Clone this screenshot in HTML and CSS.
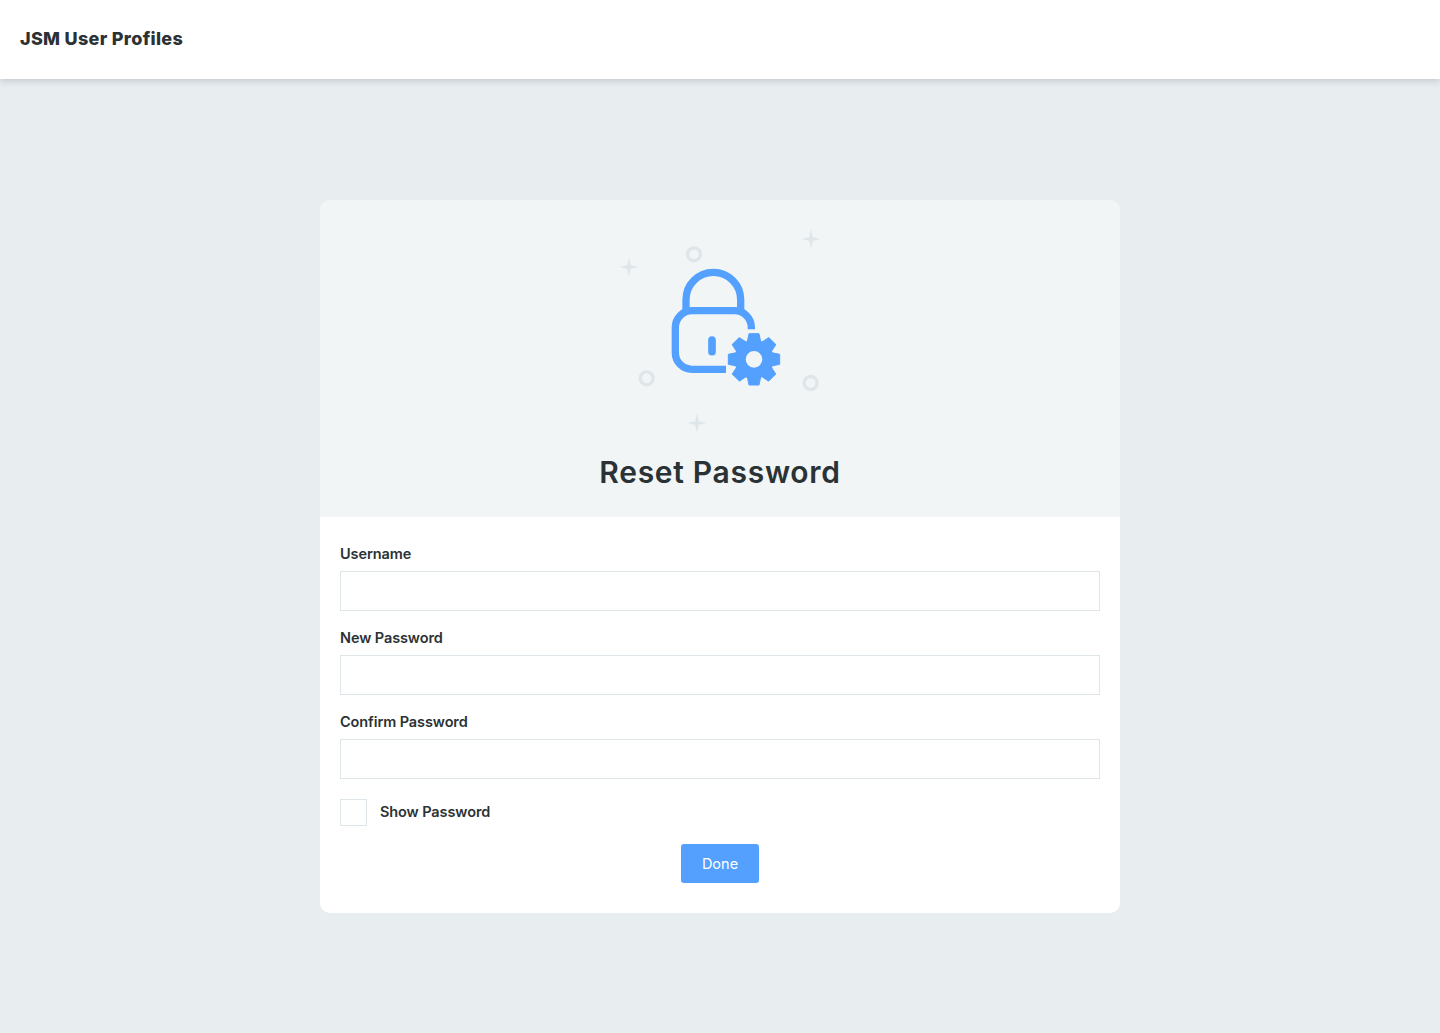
FILE: index.html
```html
<!DOCTYPE html>
<html lang="en">
<head>
<meta charset="utf-8">
<title>Reset Password</title>
<link rel="stylesheet" href="styles.css">
</head>
<body>
<header class="topbar"><span class="brand">JSM User Profiles</span></header>
<main class="page">
  <section class="card">
    <div class="card-head">
      <svg class="art" viewBox="0 0 660 660" aria-hidden="true">
        <g class="deco-ring">
          <circle cx="252" cy="103" r="19.5"/>
          <circle cx="110" cy="475" r="19.5"/>
          <circle cx="602" cy="489" r="19.5"/>
        </g>
        <g class="deco-star">
          <path transform="translate(57 141)" d="M0-26L5-5 26 0 5 5 0 26-5 5-26 0-5-5Z"/>
          <path transform="translate(603 57)" d="M0-26L5-5 26 0 5 5 0 26-5 5-26 0-5-5Z"/>
          <path transform="translate(261 609)" d="M0-26L5-5 26 0 5 5 0 26-5 5-26 0-5-5Z"/>
        </g>
        <g class="lock">
          <path d="M228 272V239a82 82 0 0 1 164 0V272"/>
          <path d="M424 328V322a50 50 0 0 0-50-50H246a50 50 0 0 0-50 50V398a50 50 0 0 0 50 50H348"/>
          <path d="M306 360V395"/>
        </g>
        <g class="gear" transform="translate(432 418)">
          <circle class="gear-ring" r="42"/>
          <path d="M-15-77H15L21-48H-21Z"/>
          <path d="M-15-77H15L21-48H-21Z" transform="rotate(45)"/>
          <path d="M-15-77H15L21-48H-21Z" transform="rotate(90)"/>
          <path d="M-15-77H15L21-48H-21Z" transform="rotate(135)"/>
          <path d="M-15-77H15L21-48H-21Z" transform="rotate(180)"/>
          <path d="M-15-77H15L21-48H-21Z" transform="rotate(225)"/>
          <path d="M-15-77H15L21-48H-21Z" transform="rotate(270)"/>
          <path d="M-15-77H15L21-48H-21Z" transform="rotate(315)"/>
        </g>
      </svg>
      <h1 class="title">Reset Password</h1>
    </div>
    <form class="form">
      <div class="field">
        <label class="label" for="u">Username</label>
        <input class="input" id="u" type="text">
      </div>
      <div class="field">
        <label class="label" for="n">New Password</label>
        <input class="input" id="n" type="password">
      </div>
      <div class="field">
        <label class="label" for="c">Confirm Password</label>
        <input class="input" id="c" type="password">
      </div>
      <label class="check">
        <span class="box"></span>
        <span class="check-text">Show Password</span>
      </label>
      <div class="actions"><button class="btn" type="button">Done</button></div>
    </form>
  </section>
</main>
</body>
</html>
```
FILE: styles.css
```css
* { box-sizing: border-box; }
html, body { height: 100%; }
body {
  margin: 0;
  background: #e8edf0;
  font-family: Inter, "Liberation Sans", sans-serif;
  color: #2b3235;
  display: flex;
  flex-direction: column;
}
.topbar {
  height: 79px;
  flex: none;
  background: #fff;
  display: flex;
  align-items: center;
  padding: 0 20px 2px;
  box-shadow: 0 2px 7px rgba(40, 50, 60, 0.2);
}
.brand { font-size: 18px; font-weight: 800; letter-spacing: 0.3px; }
.page {
  flex: 1;
  display: flex;
  justify-content: center;
  padding-top: 121px;
}
.card {
  width: 800px;
  height: 713px;
  background: #fff;
  border-radius: 10px;
  overflow: hidden;
}
.card-head {
  height: 317px;
  background: #f1f5f6;
  padding-top: 20px;
  display: flex;
  flex-direction: column;
  align-items: center;
}
.art { width: 220px; height: 220px; flex: none; display: block; }
.deco-ring circle { fill: none; stroke: #dfe6ea; stroke-width: 10; }
.deco-star path { fill: #dfe6ea; stroke: #dfe6ea; stroke-width: 1; }
.lock path { fill: none; stroke: #54a0ff; stroke-width: 22; stroke-linecap: butt; }
.lock path:last-child { stroke-width: 23; stroke-linecap: round; }
.gear path { fill: #54a0ff; stroke: #54a0ff; stroke-width: 3; stroke-linejoin: round; }
.gear-ring { fill: none; stroke: #54a0ff; stroke-width: 34; }
.title {
  margin: 14px 0 0;
  font-size: 30px;
  line-height: 36px;
  font-weight: 600;
  letter-spacing: 0.7px;
  color: #2b3235;
}
.form { padding: 28px 20px 0; }
.field { height: 84px; }
.label {
  display: block;
  font-size: 14.5px;
  line-height: 18px;
  font-weight: 600;
  letter-spacing: -0.1px;
  margin-bottom: 8px;
}
.input {
  display: block;
  width: 100%;
  height: 40px;
  border: 1px solid #dfe6ea;
  background: #fff;
  padding: 0 10px;
  outline: none;
}
.check {
  display: flex;
  align-items: center;
  gap: 13px;
  margin-top: 2px;
}
.box {
  width: 27px;
  height: 27px;
  border: 1px solid #dfe6ea;
  background: #fff;
}
.check-text { font-size: 14.5px; font-weight: 600; letter-spacing: -0.1px; padding-bottom: 2px; }
.actions { display: flex; justify-content: center; margin-top: 18px; }
.btn {
  width: 78px;
  height: 39px;
  border: 0;
  border-radius: 3px;
  background: #54a0ff;
  color: #fff;
  font-family: inherit;
  font-size: 14.5px;
  font-weight: 400;
}
```
